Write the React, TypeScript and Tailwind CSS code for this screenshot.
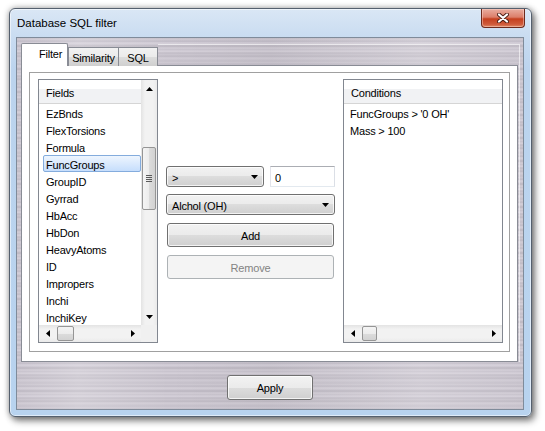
import React from "react";

const metal =
  "bg-[linear-gradient(90deg,rgba(255,255,255,0)_0%,rgba(255,255,255,0.2)_12%,rgba(255,255,255,0)_30%,rgba(0,0,0,0.03)_50%,rgba(255,255,255,0.16)_80%,rgba(255,255,255,0)_100%),repeating-linear-gradient(180deg,#c5c0ca_0px,#d0cbd4_2px,#bdb8c3_3px,#d6d1da_5px,#c8c3cd_7px,#bab5bf_8px,#d3ced7_10px,#c6c1cb_12px,#dad5de_13px,#c1bcc6_15px,#cdc8d1_17px,#bcb7c1_18px,#d2cdd6_20px,#c5c0ca_23px)]";

const btnGrad =
  "bg-[linear-gradient(180deg,#f2f2f2_0%,#ebebeb_50%,#dddddd_50%,#cfcfcf_100%)]";

const fields = [
  "EzBnds",
  "FlexTorsions",
  "Formula",
  "FuncGroups",
  "GroupID",
  "Gyrrad",
  "HbAcc",
  "HbDon",
  "HeavyAtoms",
  "ID",
  "Impropers",
  "Inchi",
  "InchiKey",
];

function Tri({ dir }: { dir: "up" | "down" | "left" | "right" }) {
  const pts =
    dir === "up"
      ? "0,4 7,4 3.5,0"
      : dir === "down"
      ? "0,0 7,0 3.5,4"
      : dir === "left"
      ? "4,0 4,7 0,3.5"
      : "0,0 0,7 4,3.5";
  const w = dir === "up" || dir === "down" ? 7 : 4;
  const h = dir === "up" || dir === "down" ? 4 : 7;
  return (
    <svg width={w} height={h} viewBox={`0 0 ${w} ${h}`}>
      <polygon points={pts} fill="#000" />
    </svg>
  );
}

function VScroll() {
  return (
    <div className="w-[16px] flex flex-col bg-[linear-gradient(90deg,#e3e3e3,#f2f2f2_25%,#f2f2f2_75%,#eaeaea)]">
      <div className="h-[17px] flex items-center justify-center">
        <Tri dir="up" />
      </div>
      <div className="h-[50px]" />
      <div className="mx-[1px] h-[63px] rounded-[2px] border border-[#959595] bg-[linear-gradient(90deg,#f4f4f4_0%,#ececec_50%,#dcdcdc_50%,#d2d2d2_100%)] flex flex-col items-center justify-center gap-[1px]">
        <div className="w-[6px] h-[1px] bg-[#5a5a5a]" />
        <div className="w-[6px] h-[1px] bg-[#5a5a5a]" />
        <div className="w-[6px] h-[1px] bg-[#5a5a5a]" />
        <div className="w-[6px] h-[1px] bg-[#5a5a5a]" />
      </div>
      <div className="flex-1" />
      <div className="h-[17px] flex items-center justify-center">
        <Tri dir="down" />
      </div>
    </div>
  );
}

function HScroll({ thumb }: { thumb: string }) {
  return (
    <div className="flex-1 h-[17px] flex items-center bg-[linear-gradient(180deg,#e3e3e3,#f2f2f2_25%,#f2f2f2_75%,#eaeaea)]">
      <div className="w-[17px] h-full flex items-center justify-center">
        <Tri dir="left" />
      </div>
      <div className="w-[1px]" />
      <div
        className={`${thumb} h-[15px] rounded-[2px] border border-[#959595] bg-[linear-gradient(180deg,#f4f4f4_0%,#ececec_50%,#dcdcdc_50%,#d2d2d2_100%)]`}
      />
      <div className="flex-1" />
      <div className="w-[17px] h-full flex items-center justify-center">
        <Tri dir="right" />
      </div>
    </div>
  );
}

function Header({ label }: { label: string }) {
  return (
    <div className="h-[24px] shrink-0 border-b border-[#d5d5d5] bg-[linear-gradient(180deg,#ffffff_0%,#ffffff_38%,#f1f2f4_39%,#f1f2f4_100%)] flex items-center pl-[7px] pt-[4px]">
      {label}
    </div>
  );
}

function FieldsList() {
  return (
    <div className="w-[120px] h-[264px] border border-[#828790] bg-white flex flex-col shrink-0">
      <div className="flex flex-1 min-h-0">
        <div className="flex-1 flex flex-col overflow-hidden">
          <Header label="Fields" />
          {fields.map((f) =>
            f === "FuncGroups" ? (
              <div
                key={f}
                className="h-[17px] ml-[4px] pl-[2px] pt-[4px] flex items-center rounded-[2px] border border-[#84acdd] bg-[linear-gradient(180deg,#eef5fe,#c6defc)]"
              >
                {f}
              </div>
            ) : (
              <div key={f} className="h-[17px] flex items-center pl-[7px] pt-[4px]">
                {f}
              </div>
            )
          )}
        </div>
        <VScroll />
      </div>
      <div className="flex">
        <HScroll thumb="w-[17px]" />
        <div className="w-[16px] bg-[#f0f0f0]" />
      </div>
    </div>
  );
}

function ConditionsList() {
  return (
    <div className="w-[160px] h-[264px] border border-[#828790] bg-white flex flex-col shrink-0">
      <div className="flex-1 flex flex-col">
        <Header label="Conditions" />
        <div className="h-[17px] flex items-center pl-[6px] pt-[4px]">
          FuncGroups &gt; '0 OH'
        </div>
        <div className="h-[17px] flex items-center pl-[6px] pt-[4px]">
          Mass &gt; 100
        </div>
      </div>
      <div className="flex">
        <HScroll thumb="w-[15px]" />
      </div>
    </div>
  );
}

function Combo({ label, w }: { label: string; w: string }) {
  return (
    <div
      className={`${w} h-[21px] rounded-[3px] border border-[#707070] ${btnGrad} shadow-[inset_0_0_0_1px_rgba(255,255,255,0.75)] flex items-center pl-[5px] pr-[5px]`}
    >
      <span className="flex-1 pt-[3px]">{label}</span>
      <Tri dir="down" />
    </div>
  );
}

function Button({ label, w, h }: { label: string; w: string; h: string }) {
  return (
    <div
      className={`${w} ${h} rounded-[3px] border border-[#707070] ${btnGrad} shadow-[inset_0_0_0_1px_rgba(255,255,255,0.75)] flex items-center justify-center pt-[2px]`}
    >
      {label}
    </div>
  );
}

export default function App() {
  return (
    <div className="w-[545px] h-[431px] bg-white overflow-hidden font-['Liberation_Sans',Arial,sans-serif] text-[11px] tracking-[-0.2px] text-black leading-none pt-[8px] pl-[9px]">
      <div className="w-[523px] h-[409px] rounded-[6px] border border-[#55606e] bg-[linear-gradient(180deg,#dae7f5_0px,#c9dcf1_28px,#bcd4ee_60px,#b8d3ef_100%)] shadow-[0_0_6px_rgba(0,0,0,0.35),3px_4px_7px_rgba(0,0,0,0.45),inset_0_0_0_1px_rgba(255,255,255,0.55)] flex flex-col">
        {/* title bar */}
        <div className="h-[28px] flex shrink-0">
          <div className="pl-[7px] flex items-center text-[11.5px] tracking-normal pt-[1px]">
            Database SQL filter
          </div>
          <div className="ml-auto mr-[6px] w-[44px] h-[19px] rounded-b-[4px] border border-t-0 border-[#6e2a1c] bg-[linear-gradient(180deg,#e9ad9f_0%,#dc7f6a_45%,#c5401f_55%,#cf5a3a_85%,#e08a66_100%)] shadow-[inset_0_0_0_1px_rgba(255,220,210,0.45)] flex items-center justify-center">
            <svg width="12" height="10" viewBox="0 0 12 10">
              <path
                d="M2 1.5 L10 8.5 M10 1.5 L2 8.5"
                stroke="#4a1d14"
                strokeWidth="4"
                strokeLinecap="round"
              />
              <path
                d="M2 1.5 L10 8.5 M10 1.5 L2 8.5"
                stroke="#ffffff"
                strokeWidth="2.2"
                strokeLinecap="round"
              />
            </svg>
          </div>
        </div>
        {/* client */}
        <div
          className={`ml-[6px] w-[508px] h-[373px] border border-[#7f8b9a] ${metal} flex flex-col`}
        >
          <div className="mt-[6px] ml-[4px] w-[499px] border-r border-[rgba(255,255,255,0.6)] flex flex-col">
            <div className="h-[22px] flex items-end -mb-[1px] relative z-10">
              <div className="w-[47px] h-[23px] bg-white border border-b-0 border-[#898c95] rounded-t-[2px] flex items-center pl-[17px] pb-[1px]">
                Filter
              </div>
              <div className="w-[51px] h-[19px] border border-b-0 border-[#898c95] bg-[linear-gradient(180deg,#f2f2f2_0%,#ebebeb_50%,#dddddd_50%,#cfcfcf_100%)] flex items-center justify-center pt-[2px]">
                Similarity
              </div>
              <div className="w-[39px] h-[19px] border border-b-0 border-l-0 border-[#898c95] bg-[linear-gradient(180deg,#f2f2f2_0%,#ebebeb_50%,#dddddd_50%,#cfcfcf_100%)] flex items-center justify-center pt-[2px]">
                SQL
              </div>
              <div className="flex-1 self-stretch border-t border-[rgba(255,255,255,0.6)]" />
            </div>
            <div className="w-[497px] h-[297px] border border-[#898c95] bg-white pt-[6px] pl-[7px]">
              <div className="w-[481px] h-[280px] border border-[#a0a0a0] flex pt-[6px] pl-[8px] gap-[8px]">
                <FieldsList />
                <div className="w-[169px] shrink-0 pt-[87px] flex flex-col">
                  <div className="flex gap-[6px]">
                    <Combo label=">" w="w-[98px]" />
                    <div className="w-[65px] h-[21px] border border-[#abadb3] border-b-[#e3e9ef] border-l-[#e2e3ea] border-r-[#dbdfe6] bg-white flex items-center pl-[4px] pt-[3px]">
                      0
                    </div>
                  </div>
                  <div className="mt-[7px]">
                    <Combo label="Alchol (OH)" w="w-[169px]" />
                  </div>
                  <div className="mt-[8px] ml-[1px]">
                    <Button label="Add" w="w-[167px]" h="h-[24px]" />
                  </div>
                  <div className="mt-[8px] ml-[1px] w-[167px] h-[24px] rounded-[3px] border border-[#adb2b5] bg-[#f4f4f4] text-[#838383] flex items-center justify-center pt-[2px]">
                    Remove
                  </div>
                </div>
                <ConditionsList />
              </div>
            </div>
          </div>
          <div className="pt-[13px] flex justify-center">
            <Button label="Apply" w="w-[86px]" h="h-[25px]" />
          </div>
        </div>
      </div>
    </div>
  );
}
